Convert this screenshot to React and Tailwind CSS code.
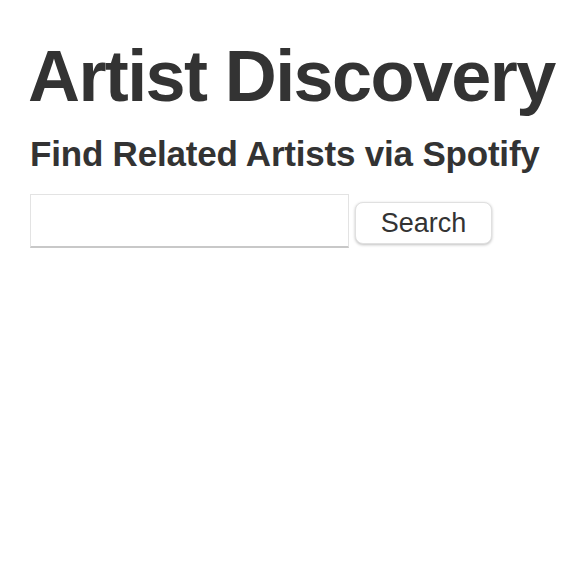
export default function App() {
    return (
        <div className="min-h-screen bg-white px-[28px] pt-[36px] text-[#333] font-['Liberation_Sans',Arial,sans-serif]">
            <h1 className="text-[72px] leading-[80px] font-bold whitespace-nowrap tracking-[-1.6px]">Artist Discovery</h1>
            <h2 className="mt-[18px] text-[35px] leading-[40px] font-bold whitespace-nowrap pl-[2px] tracking-[-0.2px]">Find Related Artists via Spotify</h2>
            <div className="mt-[20px] flex items-start gap-[6px] pl-[2px]">
                <input
                    type="text"
                    className="w-[319px] h-[54px] border border-[#e3e3e3] border-b-2 border-b-[#c8c8c8] outline-none px-2 text-[24px]"
                />
                <button className="mt-[8px] w-[137px] h-[42px] rounded-[8px] border border-[#e0e0e0] bg-white shadow-[0_1px_3px_rgba(0,0,0,0.25)] text-[27px]">
                    Search
                </button>
            </div>
        </div>
    )
}
